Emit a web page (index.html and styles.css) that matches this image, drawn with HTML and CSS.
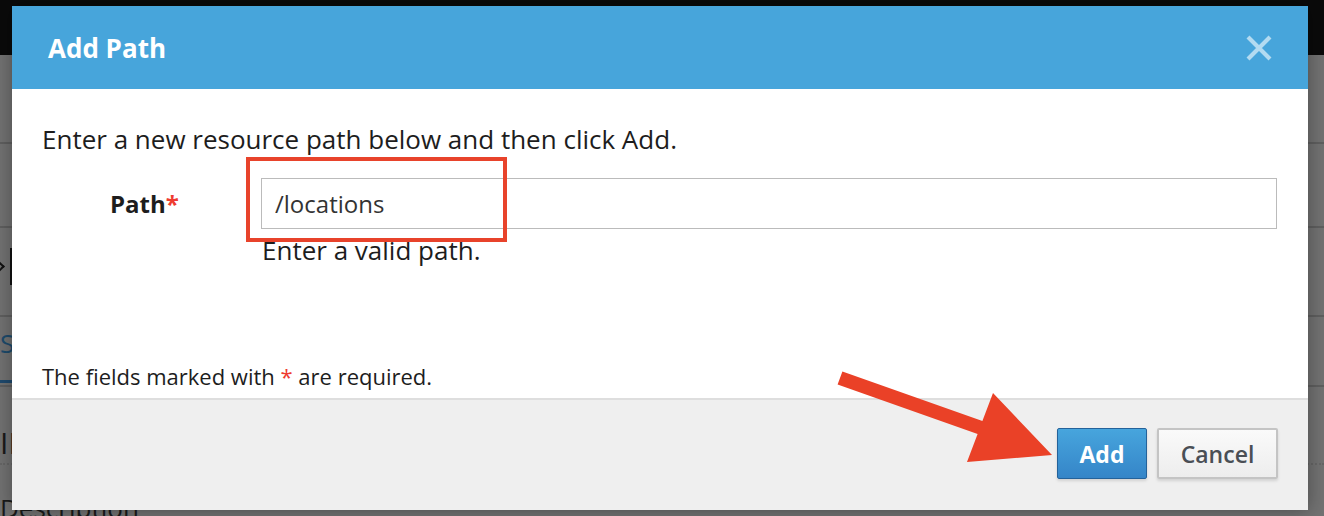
FILE: index.html
```html
<!DOCTYPE html>
<html lang="en">
<head>
<meta charset="utf-8">
<title>Add Path</title>
<link rel="stylesheet" href="styles.css">
</head>
<body>
<div class="page">
  <div class="topbar"></div>
  <div class="bg-content">
    <div class="bg-row r1"></div>
    <div class="bg-row r2"></div>
    <div class="bg-row r3"><span class="chev"></span><span class="bar"></span></div>
    <div class="bg-row r4"><span class="tab">Settings</span></div>
    <div class="bg-row r5"><span class="big">INFO</span></div>
    <div class="bg-row r6"><span class="desc">Description</span></div>
  </div>
</div>

<div class="modal">
  <div class="modal-header">
    <h2 class="modal-title">Add Path</h2>
    <button class="close" aria-label="Close">
      <svg width="26" height="26" viewBox="0 0 26 26"><path d="M2 2 L24 24 M24 2 L2 24" stroke="#b3dbf1" stroke-width="4.2" fill="none"/></svg>
    </button>
  </div>
  <div class="modal-body">
    <p class="intro">Enter a new resource path below and then click Add.</p>
    <div class="form-row">
      <label class="form-label">Path<span class="req">*</span></label>
      <div class="field">
        <input class="form-input" type="text" value="/locations">
        <div class="help">Enter a valid path.</div>
      </div>
    </div>
    <p class="note">The fields marked with <span class="req">*</span> are required.</p>
  </div>
  <div class="modal-footer">
    <button class="btn btn-primary">Add</button>
    <button class="btn btn-default">Cancel</button>
  </div>
  <div class="highlight"></div>
</div>

<svg class="arrow" width="1324" height="516" viewBox="0 0 1324 516">
  <polygon points="842.4,371.4 982.4,420.9 993,393 1052,455 967,462 977.6,434.1 837.6,384.6" fill="#ea4127"/>
</svg>
</body>
</html>
```

FILE: styles.css
```css
* { box-sizing: border-box; }
html, body { margin: 0; padding: 0; }
body {
  width: 1324px;
  height: 516px;
  overflow: hidden;
  position: relative;
  background: #727272;
  font-family: "Open Sans", "Liberation Sans", sans-serif;
}

.page { width: 1324px; height: 516px; }
.topbar { height: 55px; background: #0a0a0a; }
.bg-content { display: flex; flex-direction: column; }
.bg-row { border-bottom: 2px solid #5f5f5f; position: relative; overflow: hidden; }
.r1 { height: 89px; }
.r2 { height: 84px; }
.r3 { height: 89px; }
.r4 { height: 70px; }
.r5 { height: 78px; border-bottom: 2px dotted #666; }
.r6 { height: 60px; border-bottom: none; }

.chev {
  position: absolute;
  left: -6px;
  top: 34px;
  width: 9px;
  height: 9px;
  border-top: 2px solid #111;
  border-right: 2px solid #111;
  transform: rotate(45deg);
}
.bar { position: absolute; left: 10px; top: 20px; width: 2px; height: 37px; background: #111; }
.tab { position: absolute; left: 0; top: 8px; font-size: 26px; line-height: 36px; color: #1d4b6c; }
.r4::after { content: ""; position: absolute; left: 0; bottom: 2px; width: 60px; height: 3px; background: #1f4a6e; }
.big { position: absolute; left: 0; top: 36px; font-size: 30px; line-height: 40px; color: #1a1a1a; }
.desc { position: absolute; left: 0; top: 26px; font-size: 26px; line-height: 34px; color: #1a1a1a; }

.modal {
  position: absolute;
  left: 12px;
  top: 6px;
  width: 1296px;
  height: 504px;
  background: #fff;
  display: flex;
  flex-direction: column;
  box-shadow: 0 0 18px rgba(0,0,0,0.35);
}

.modal-header {
  height: 83px;
  flex: none;
  background: #47a5db;
  display: flex;
  align-items: center;
  justify-content: space-between;
  padding: 0 36px 0 36px;
}
.modal-title {
  margin: 0;
  color: #fff;
  font-size: 26px;
  font-weight: 700;
  line-height: 32px;
}
.close {
  border: none;
  background: none;
  padding: 0;
  width: 26px;
  height: 26px;
  display: block;
  margin-top: 1px;
}
.close svg { display: block; }

.modal-body {
  height: 309px;
  flex: none;
  padding: 34px 31px 8px 30px;
  display: flex;
  flex-direction: column;
}
.intro {
  margin: 0;
  font-size: 26px;
  line-height: 32px;
  color: #1d1d1d;
}
.form-row {
  margin-top: 23px;
  display: grid;
  grid-template-columns: 219px 1fr;
}
.form-label {
  padding-left: 68px;
  font-size: 24px;
  font-weight: 700;
  line-height: 51px;
  color: #1d1d1d;
}
.req { color: #ee3b30; }
.form-input {
  display: block;
  width: 100%;
  height: 51px;
  border: 1px solid #bbbbbb;
  padding: 0 13px;
  font-family: "Open Sans", "Liberation Sans", sans-serif;
  font-size: 24px;
  color: #333;
  outline: none;
  background: #fff;
}
.help {
  margin-top: 5px;
  padding-left: 1px;
  font-size: 26px;
  line-height: 32px;
  color: #1d1d1d;
}
.note {
  margin: auto 0 0 0;
  font-size: 22px;
  line-height: 28px;
  color: #1d1d1d;
}

.modal-footer {
  flex: 1;
  background: #efefef;
  border-top: 2px solid #dedede;
  display: flex;
  justify-content: flex-end;
  align-items: flex-start;
  gap: 10px;
  padding: 28px 30px 0 0;
}
.btn {
  height: 51px;
  font-family: "Open Sans", "Liberation Sans", sans-serif;
  font-size: 23px;
  border-radius: 2px;
  padding: 0;
  box-shadow: 0 2px 3px rgba(0,0,0,0.12);
}
.btn-primary {
  width: 90px;
  color: #fff;
  font-weight: 700;
  background: linear-gradient(#47a5dd, #3585c8);
  border: 1px solid #24629a;
}
.btn-default {
  width: 121px;
  color: #4a4f55;
  font-weight: 600;
  background: linear-gradient(#fafafa, #ededed);
  border: 2px solid #c4c4c4;
}

.highlight {
  position: absolute;
  left: 234px;
  top: 151px;
  width: 261px;
  height: 85px;
  border: 4px solid #e8432b;
}

.arrow {
  position: absolute;
  left: 0;
  top: 0;
  pointer-events: none;
}
```
